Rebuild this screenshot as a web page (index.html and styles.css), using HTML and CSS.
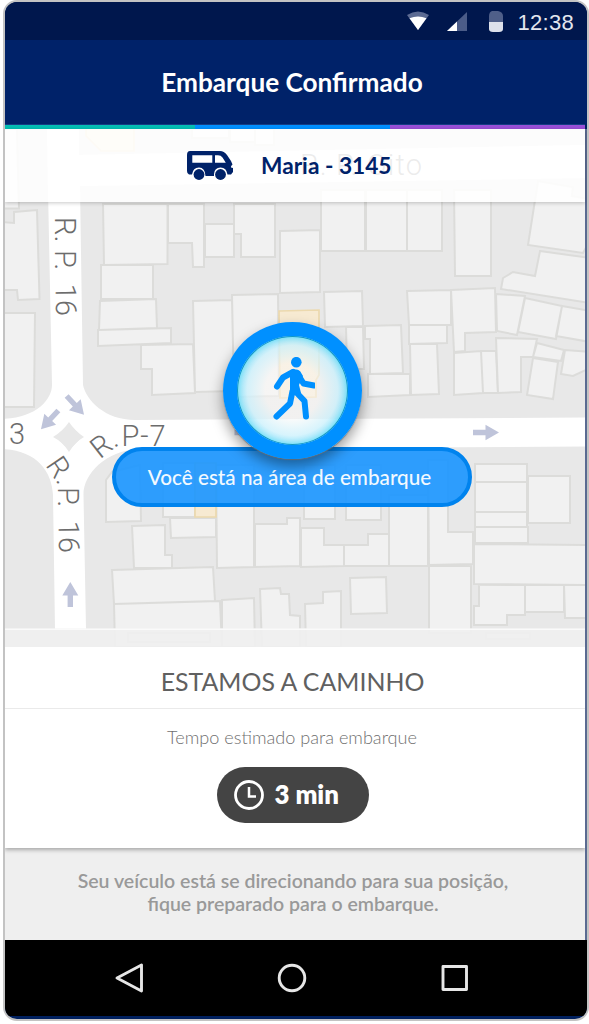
FILE: index.html
```html
<!DOCTYPE html>
<html lang="pt-BR">
<head>
<meta charset="utf-8">
<title>Embarque Confirmado</title>
<link rel="stylesheet" href="styles.css">
</head>
<body>
<main class="phone">
  <div class="status">
    <svg class="status-icons" viewBox="0 0 100 24">
      <path d="M1 4Q12 -3 23 4L12 19Z" fill="#5c6b93"/><path d="M3.500 7.300Q12 3.500 20.500 7.300L12 19Z" fill="#fff"/>
      <path d="M61 1V20H41Z" fill="#4b5c88"/><path d="M51 10.500V20H41Z" fill="#fff"/>
      <path d="M86 0H92Q97 1 97 5V11H83V5Q83 1 86 0Z" fill="#4f5f89"/><path d="M83 11H97V18Q97 21 93 21H87Q83 21 83 18Z" fill="#dde1eb"/>
    </svg>
    <span class="clock">12:38</span>
  </div>
  <header class="appbar"><h1 class="title">Embarque Confirmado</h1></header>
  <div class="stripes"><i class="teal"></i><i class="blue"></i><i class="purple"></i></div>

  <section class="stage">
    <svg class="map" viewBox="5 129 580 518">
      <rect x="5" y="129" width="580" height="518" fill="#e8e8e8"/>
      <g fill="#f1f1f1" stroke="#dcdcda" stroke-width="2">
        <path d="M0 129H17L19 208.500H0ZM0 222L14 223V212L37 210L39.500 299L18 300L17 290H0ZM0 313H35L34 407H0Z"/>
        <path d="M103 204H167.500V264L104 265ZM168 204H204V267H193L192 243H168ZM205 224H234V257H205ZM234 204H275V257H241V234H234Z"/>
        <path d="M101 265H153V299H101ZM100 301L156 299L157 328L99 330ZM98 330L171 328V343L98 346ZM141 345L193 344L195 393L152 395V369H141ZM193 301L232 300L234 391L195 392ZM232 295L278 294L279 396L234 397Z"/>
        <path d="M280 231L320 230V292L280 293ZM321 190H365V251H321ZM366 190H407V251H366ZM407 190H442V251H407ZM454 190H491V276H455Z"/>
        <path d="M324 292L362 291L363 326L325 327ZM346 327H363L364 369H347ZM365 326L401 325L403 373L370 374V339H365ZM368 374H410V395L368 397Z"/>
        <path d="M407 291L451 290V325H409ZM409 325H447V343L409 344ZM410 344H437L439 394L411 395ZM451 290L495 288L496 332L465 333V351L454 352ZM454 353L481 351L483 393L454 395ZM481 351H496L498 393H483Z"/>
        <path d="M496 294L525 296L517 335L497 331ZM525 298L562 306L556 339L518 332ZM562 306L590 311V342L556 336ZM496 338L537 339L533 357H521V392L498 393ZM537 343L564 350L561 361L533 357ZM533 358L558 362L553 399L527 395ZM565 350L590 352V368L573 376L561 374Z"/>
        <path d="M538 181L573 187L572 196L590 199V240L583 253L528 245ZM540 251L590 258V303L501 289L503 278L513 272L535 276Z"/>
        <path d="M192 129H229V138H192ZM230 129H255V142H230ZM255 129H274V145H255Z"/>
        <path d="M106 480L112 472L140 465L141 521L106 522ZM163 463H195V517H163ZM170 518H216V537L171 538ZM132 526L165 525V555H172V568H134ZM112 570L213 567L215 601L114 604ZM114 604L220 601L222 647H115Z"/>
        <path d="M216 465H254V567L217 568ZM255 524H287V518H300V566L255 567ZM304 465H335V519H304ZM301 528H324V545H344V566L301 567ZM346 465H381V520H346ZM344 545H368V534H389V566H344ZM389 495H428V566H389ZM428 460H448V532H473V564L429 565ZM429 566H471V633H429Z"/>
        <path d="M222 600L254 598L255 647H222ZM260 589L280 588L281 594H289L290 615L300 616V647H262ZM305 604L323 603V592L341 591V647H306ZM350 578L386 577L387 613L351 614Z"/>
        <path d="M475 464H527V482H475ZM475 482H527V512H475ZM475 512H527V527H475ZM475 527H528V543H475ZM474 544L590 545V585L474 584ZM528 476H570V523H528ZM479 585H525V615H507V625H474V606H479ZM525 585H564V612H525ZM564 585H590V618H565Z"/>
        <path d="M128 633H210V642H128ZM486 633H530V639H486Z"/>
      </g>
      <g fill="#f7ead2" stroke="#ecd9ae" stroke-width="1.700">
        <path d="M86 125H134V151H101L86 136ZM279 311L319 310V375L316 380V397L280 398ZM195 463H216V517H195Z"/>
      </g>
      <path fill="#fff" d="M47 129H79V155L590 145V178L80 186L83 385C86 400 105 420 135 420L590 417.500V446.500L140 449C105 450 83 475 83.500 495L86 629H55L53 495C52 470 35 449 0 449V419C35 419 52 400 52 385L48 190Z"/>
      <path fill="#e8e8e8" d="M69 422Q75 431 84 437Q75 442 69 452Q63 442 53 437Q63 431 69 422Z"/>
      <path fill="#e8e8e8" d="M69 424L82 437L69 450L56 437Z"/>
      <g fill="#bfc4da">
        <path id="arrow" transform="translate(486.500 432.500)" d="M-13.500 -2.700H-1V-7.800L12.500 0L-1 7.800V2.700H-13.500Z"/>
        <use href="#arrow" transform="translate(-238.500 0)"/>
        <path transform="translate(75.500 405.500) rotate(47)" d="M-13 -2.700H-1V-8L12.500 0L-1 8V2.700H-13Z"/>
        <path transform="translate(49.500 420) rotate(133)" d="M-13 -2.700H-1V-8L12.500 0L-1 8V2.700H-13Z"/>
        <path transform="translate(70.300 594.500) rotate(-90)" d="M-12.500 -2.700H-1V-8L12.500 0L-1 8V2.700H-12.500Z"/>
      </g>
      <g class="street">
        <text transform="translate(55 217) rotate(90)">R.</text>
        <text transform="translate(55 250) rotate(90)">P.</text>
        <text transform="translate(55.500 284) rotate(89)">16</text>
        <text transform="translate(45 465) rotate(56)">R.</text>
        <text transform="translate(57.500 487) rotate(90)">P.</text>
        <text transform="translate(58.500 521) rotate(89)">16</text>
        <text transform="translate(100 459.500) rotate(-38)">R.</text>
        <text x="121.500" y="446" textLength="44">P-7</text>
        <text x="9" y="444">3</text>
        <text x="300" y="175" textLength="122">R. P. Oito</text>
      </g>
      <rect x="5" y="628.500" width="580" height="18.500" fill="#efefef" fill-opacity=".9"/>
      <rect x="5" y="628.500" width="580" height="1.500" fill="#fafafa"/>
    </svg>
    <div class="overlay">
      <div class="driver">
        <svg class="van" viewBox="0 0 46 30">
          <path fill="#002269" fill-rule="evenodd" d="M3 0H33Q37 0 40 4L44 10L45.500 13.500Q43.500 15 44 16.500L46 17V21L44 23.500H40.500Q39.500 16.500 33.500 16.500T27 23V25H18.500Q18 16.500 12 16.500T5 23.500H2Q0 23 0 20V4Q0 0 3 0ZM5.300 4.200V11.800H25.300V4.200ZM28 4.200V11.800H38.800L35.500 6.500Q34 4.200 31 4.200Z"/>
          <circle cx="12" cy="23.500" r="5.400" fill="#002269"/><circle cx="33.500" cy="23.500" r="5.400" fill="#002269"/>
        </svg>
        <strong class="driver-name">Maria - 3145</strong>
      </div>
      <div class="pin">
        <svg class="walker" viewBox="0 0 42 64">
          <circle cx="23.300" cy="5.200" r="5.300" fill="#0090ff"/>
          <path d="M17 13.500Q22 11 27 14L30 19L26 28L28 36L17 39L17 24Z" fill="#0090ff"/>
          <path d="M20 15L10 20.500L4 29.500M24 16L30.500 26.500L41 28.500M19.500 34L17 46.500L3.500 59.500M22 34L31.500 44L33 59.500" fill="none" stroke="#0090ff" stroke-width="6" stroke-linecap="round" stroke-linejoin="round"/>
        </svg>
      </div>
      <div class="area">Você está na área de embarque</div>
    </div>
  </section>

  <div class="lower">
    <section class="eta">
      <h2 class="eta-title">ESTAMOS A CAMINHO</h2>
      <p class="eta-label">Tempo estimado para embarque</p>
      <div class="chip">
        <svg class="chip-icon" viewBox="0 0 30 30" fill="none" stroke="#fff"><circle cx="15" cy="15" r="13.500" stroke-width="2.800"/><path d="M15 7V16.500H22" stroke-width="2.500"/></svg>
        <strong class="chip-text">3 min</strong>
      </div>
    </section>
    <p class="note"><span>Seu veículo está se direcionando para sua posição,</span><span>fique preparado para o embarque.</span></p>
  </div>
  <nav class="nav">
    <svg class="nav-icons" viewBox="0 0 360 32" fill="none" stroke="#e6e6e6" stroke-width="2.900" stroke-linejoin="round">
      <path d="M28.500 3V29L4 16Z"/><circle cx="179" cy="16" r="12.800"/><rect x="330" y="4.500" width="23.500" height="23" />
    </svg>
  </nav>
</main>
</body>
</html>
```
FILE: styles.css
```css
* { box-sizing: border-box; margin: 0; }
body { background: #fff; font-family: Lato, "Open Sans", sans-serif; overflow: hidden; }
.phone {
  width: 586px; height: 1021px; margin-left: 3px;
  border: 2px solid #c3c3c3; border-radius: 14px;
  background: #00205f; overflow: hidden;
  display: flex; flex-direction: column;
}
.status {
  height: 38px; flex: none; background: #00174d; padding-right: 13px;
  display: flex; align-items: center; justify-content: flex-end; gap: 11px;
}
.status-icons { width: 100px; height: 24px; margin-top: 3px; }
.clock { font: 22px "Liberation Sans", Arial, sans-serif; color: #e3e6ee; letter-spacing: .3px; margin-top: 3px; }
.appbar { height: 84px; flex: none; background: #002269; display: flex; align-items: center; justify-content: center; padding-right: 8px; }
.title { font-size: 26.200px; font-weight: 700; color: #fff; line-height: 30px; margin-top: 0; white-space: nowrap; }
.stripes { height: 5px; flex: none; display: grid; grid-template-columns: 190px 195px 1fr; border-top: 1px solid #163d83; margin-right: 2px; }
.teal { background: #04bfb4; }
.blue { background: #0090ff; }
.purple { background: #9a50d8; }
.stage { display: grid; height: 518px; flex: none; padding-right: 2px; background: #5a6a91; }
.map, .overlay { grid-area: 1 / 1; }
.map { display: block; width: 580px; height: 518px; }
.street { font: 300 29px Roboto, sans-serif; fill: #6c6c6c; }
.overlay { display: flex; flex-direction: column; align-items: center; z-index: 1; }
.driver {
  width: 580px; height: 73px; display: flex; align-items: center; padding: 1px 0 0 182px; gap: 28px;
  background: rgba(255, 255, 255, .87); box-shadow: 0 1px 4px rgba(0, 0, 0, .22);
}
.van { width: 46px; height: 30px; }
.driver-name { color: #002269; font-size: 22.700px; line-height: 28px; white-space: nowrap; }
.pin {
  width: 139px; height: 137px; margin-top: 120px; margin-right: 5px; border-radius: 50%;
  border: 14px solid #0090ff; z-index: 2;
  display: flex; justify-content: center; padding: 21px 0 0 3px;
  background: radial-gradient(circle at 50% 50%, rgba(250, 248, 246, .55) 35%, rgba(205, 241, 252, .8) 58%, rgba(93, 216, 250, .95) 82%) padding-box;
  box-shadow: 0 7px 14px rgba(0, 0, 0, .4), 0 1px 1px rgba(160, 160, 160, .9), inset 0 0 0 1px #1297c3, inset 0 0 7px rgba(60, 212, 245, .8);
}
.walker { width: 42px; height: 64px; }
.area {
  width: 360px; height: 60px; margin-top: -12px; margin-right: 6px;
  border: 4px solid #0083ee; border-radius: 30px; background: rgba(24, 149, 255, .9);
  color: #f2f9ff; font-size: 20.700px; font-weight: 500; line-height: 52px; text-align: center; white-space: nowrap; padding-right: 5px;
}
.lower { display: flex; flex-direction: column; flex: none; padding-right: 2px; background: #5a6a91; }
.eta { height: 201px; background: #fff; display: flex; flex-direction: column; align-items: center; box-shadow: 0 2px 4px rgba(0, 0, 0, .3); z-index: 1; clip-path: inset(0 0 -8px 0); }
.eta-title { width: 100%; height: 62px; border-bottom: 1px solid #eaeaea; font-size: 24.900px; font-weight: 400; line-height: 69px; color: #606060; text-align: center; padding-right: 5px; }
.eta-label { font-size: 18.100px; font-weight: 300; line-height: 24px; color: #707070; margin: 16px 6px 0 0; }
.chip { width: 152px; height: 56px; margin: 18px 5px 0 0; border-radius: 28px; background: #444; display: flex; align-items: center; padding-left: 17px; gap: 11px; }
.chip-icon { width: 30px; height: 30px; }
.chip-text { color: #fff; font-size: 25.800px; font-weight: 800; line-height: 30px; padding-bottom: 2px; }
.note { height: 92px; background: #efefef; color: #999; font-size: 19.500px; font-weight: 600; line-height: 23px; display: flex; flex-direction: column; align-items: center; padding: 21px 4px 0 0; white-space: nowrap; }
.nav { height: 76px; flex: none; background: #000; display: flex; align-items: center; padding-left: 108px; }
.nav-icons { width: 360px; height: 32px; }
```
